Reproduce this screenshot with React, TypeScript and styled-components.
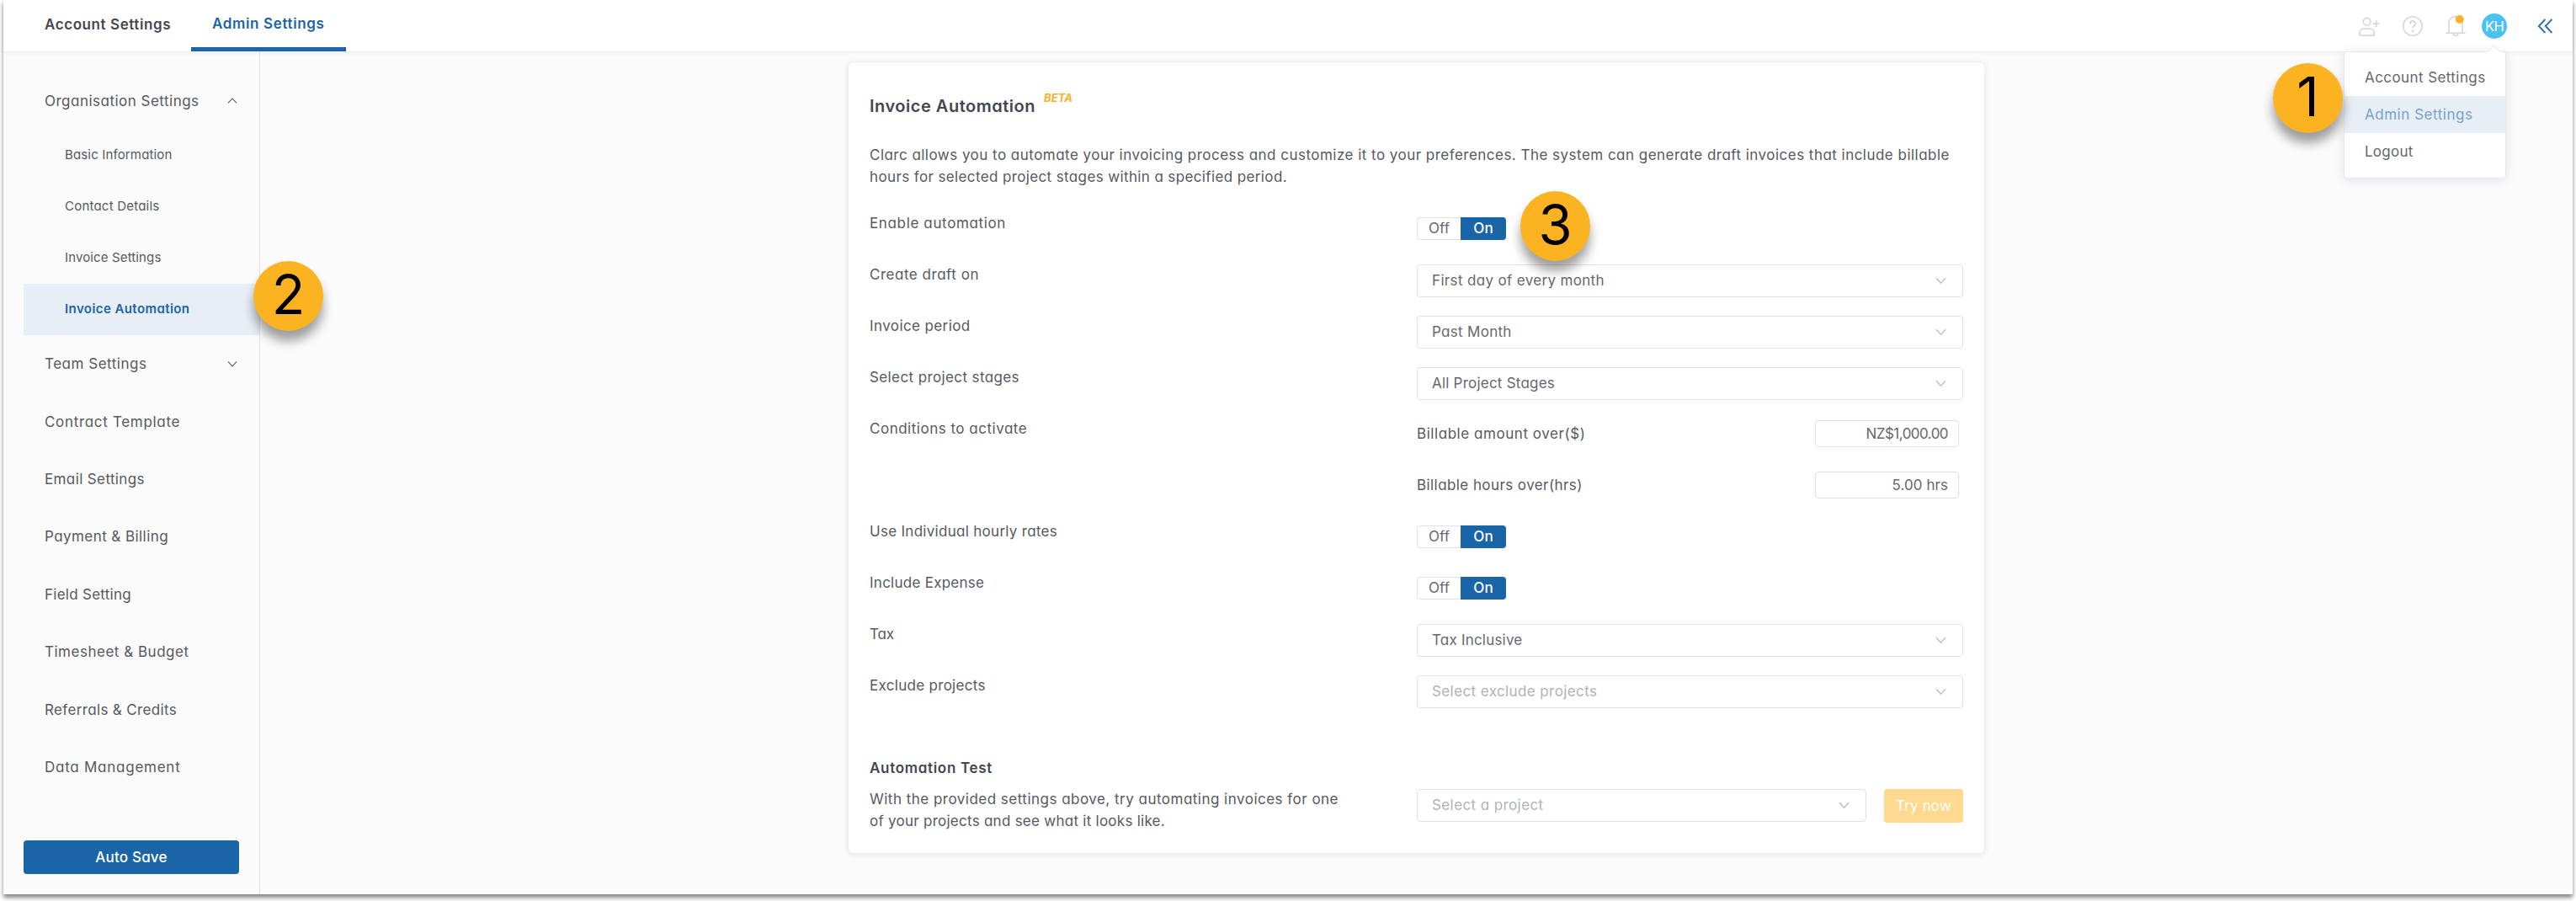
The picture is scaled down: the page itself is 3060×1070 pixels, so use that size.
import React from 'react';
import styled, { createGlobalStyle, css } from 'styled-components';

const colors = {
  primary: '#1a64a8',
  primarySoft: '#e7eef5',
  text: '#555961',
  heading: '#43474f',
  field: '#65686e',
  placeholder: '#afb2b9',
  border: '#dfe1ea',
  icon: '#d4d8de',
  accent: '#fcb322',
  page: '#fbfbfb',
};

const GlobalStyle = createGlobalStyle`
  *, *::before, *::after {
    box-sizing: border-box;
  }

  body {
    height: 1070px;
    margin: 0;
    background: #fff;
    color: ${colors.text};
    font-family: Inter, 'Liberation Sans', sans-serif;
    font-feature-settings: 'cv11';
    font-size: 17px;
    line-height: 26px;
    letter-spacing: 0.45px;
  }
`;

const Frame = styled.div`
  position: relative;
  display: flex;
  flex-direction: column;
  width: 3052px;
  height: 1062px;
  margin: 0 4px;
  background: ${colors.page};
  box-shadow: 0 4px 5px rgba(0, 0, 0, 0.48);
`;

/* Header */

const Header = styled.header`
  position: relative;
  z-index: 2;
  display: flex;
  flex: none;
  justify-content: space-between;
  height: 61px;
  padding: 0 23px 0 26px;
  background: #fff;
  box-shadow: 0 1px 5px rgba(0, 0, 0, 0.08);
`;

const Tabs = styled.nav`
  display: flex;
  align-items: flex-start;
`;

const Tab = styled.a<{ $active?: boolean }>`
  display: flex;
  align-items: center;
  height: 58px;
  padding: 0 24px 0 23px;
  color: ${colors.heading};
  font-weight: 600;
  letter-spacing: 0.58px;
  white-space: nowrap;

  ${({ $active }) =>
    $active &&
    css`
      height: 61px;
      padding: 0 25px;
      color: ${colors.primary};
      border-bottom: 5px solid ${colors.primary};
      letter-spacing: 0.64px;
    `}
`;

const HeaderActions = styled.div`
  display: flex;
  align-items: center;
  gap: 27px;

  svg {
    display: block;
    flex: none;
  }
`;

const AvatarWrap = styled.div`
  position: relative;
  margin: 0 9px 0 -8px;
`;

const Avatar = styled.div`
  display: flex;
  align-items: center;
  justify-content: center;
  width: 30px;
  height: 30px;
  border-radius: 50%;
  background: #4cc2f1;
  color: #fff;
  font-size: 16.5px;
  letter-spacing: -0.6px;
`;

const UserMenu = styled.div`
  position: absolute;
  top: 45px;
  right: 1px;
  width: 193px;
  padding: 8px 0 9px;
  background: #fff;
  border: 1px solid #e4e7ef;
  border-radius: 4px;
  box-shadow: 0 2px 14px rgba(0, 0, 0, 0.1);

  &::before {
    content: '';
    position: absolute;
    top: -6px;
    right: 8px;
    width: 11px;
    height: 11px;
    background: #fff;
    border: 1px solid #e4e7ef;
    border-color: #e4e7ef transparent transparent #e4e7ef;
    transform: rotate(45deg);
  }
`;

const UserMenuItem = styled.a<{ $active?: boolean; $tracking: number }>`
  display: flex;
  align-items: center;
  height: 44px;
  padding-left: 24px;
  background: ${({ $active }) => ($active ? colors.primarySoft : 'transparent')};
  color: ${({ $active }) => ($active ? '#76a2cb' : colors.field)};
  letter-spacing: ${({ $tracking }) => $tracking}px;
  white-space: nowrap;
`;

/* Sidebar */

const Body = styled.div`
  display: flex;
  flex: 1;
  min-height: 0;
`;

const Sidebar = styled.aside`
  display: flex;
  flex: none;
  flex-direction: column;
  width: 305px;
  padding: 24.6px 0 24px 24px;
  border-right: 1px solid #e0e3e9;
`;

const NavItem = styled.a<{ $tracking: number }>`
  display: flex;
  align-items: center;
  justify-content: space-between;
  height: 68.4px;
  padding: 0 26px 0 25px;
  letter-spacing: ${({ $tracking }) => $tracking}px;
  white-space: nowrap;
`;

const SubItem = styled.a<{ $active?: boolean; $tracking: number }>`
  display: flex;
  align-items: center;
  height: 61px;
  padding-left: 49px;
  background: ${({ $active }) => ($active ? colors.primarySoft : 'transparent')};
  color: ${({ $active }) => ($active ? colors.primary : colors.text)};
  font-size: 15px;
  font-weight: ${({ $active }) => ($active ? 600 : 400)};
  letter-spacing: ${({ $tracking }) => $tracking}px;
  white-space: nowrap;
`;

const SaveButton = styled.button`
  width: 256px;
  height: 40px;
  margin-top: auto;
  border: 0;
  border-radius: 4px;
  background: ${colors.primary};
  color: #fff;
  font: inherit;
  font-weight: 500;
  letter-spacing: 0.2px;
`;

/* Settings card */

const Main = styled.main`
  display: flex;
  flex: 1;
  align-items: flex-start;
  justify-content: center;
  padding-top: 13px;
`;

const Card = styled.section`
  width: 1349px;
  height: 939px;
  padding: 39.4px 25px 0;
  background: #fff;
  border-radius: 6px;
  box-shadow: 0 0 0 1px #eceef1, 0 1px 7px 1px rgba(30, 40, 70, 0.1);
`;

const CardTitle = styled.h1`
  display: flex;
  margin: 0 0 33px;
  color: ${colors.heading};
  font-size: 20px;
  font-weight: 600;
  line-height: 26px;
  letter-spacing: 0.51px;
`;

const Beta = styled.sup`
  margin: -10px 0 0 10px;
  color: #ffab2e;
  font-size: 13px;
  font-style: italic;
  font-weight: 700;
  line-height: 26px;
  letter-spacing: 0.1px;
`;

const Paragraph = styled.p`
  margin: 0;
  line-height: 25.6px;
`;

const Line = styled.span<{ $tracking: number }>`
  display: block;
  letter-spacing: ${({ $tracking }) => $tracking}px;
  white-space: nowrap;
`;

const Form = styled.div`
  margin-top: 18.4px;
`;

const FormRow = styled.div`
  display: grid;
  grid-template-columns: 650px 649px;
  height: 61px;
`;

const Label = styled.label<{ $tracking: number }>`
  padding-top: 10px;
  letter-spacing: ${({ $tracking }) => $tracking}px;
  white-space: nowrap;
`;

const Toggle = styled.div`
  display: flex;
  width: 106px;
  height: 27px;
  margin-top: 15.6px;
`;

const ToggleOption = styled.span<{ $on?: boolean }>`
  display: flex;
  align-items: center;
  justify-content: center;
  width: 52px;
  border: 1px solid ${colors.border};
  border-right: 0;
  border-radius: 4px 0 0 4px;
  color: ${colors.field};
  letter-spacing: 0;

  ${({ $on }) =>
    $on &&
    css`
      width: 54px;
      border: 0;
      border-radius: 0 4px 4px 0;
      background: ${colors.primary};
      color: #fff;
      font-weight: 500;
    `}
`;

const SelectBox = styled.div<{ $width?: number; $placeholder?: boolean; $tracking: number }>`
  display: flex;
  align-items: center;
  justify-content: space-between;
  width: ${({ $width = 649 }) => $width}px;
  height: 39px;
  padding: 0 19px 0 17px;
  border: 1px solid ${colors.border};
  border-radius: 4px;
  background: #fff;
  color: ${({ $placeholder }) => ($placeholder ? colors.placeholder : colors.field)};
  letter-spacing: ${({ $tracking }) => $tracking}px;
  white-space: nowrap;
`;

const SelectCell = styled.div`
  padding-top: 11px;
`;

const Condition = styled.div`
  display: flex;
  align-items: center;
  justify-content: space-between;
  height: 32px;
  margin: 13px 5px 0 0;
`;

const ConditionLabel = styled.span<{ $tracking: number }>`
  letter-spacing: ${({ $tracking }) => $tracking}px;
`;

const NumberBox = styled.div<{ $tracking: number }>`
  display: flex;
  align-items: center;
  justify-content: flex-end;
  width: 171px;
  height: 32px;
  padding-right: 12px;
  border: 1px solid ${colors.border};
  border-radius: 4px;
  color: ${colors.field};
  letter-spacing: ${({ $tracking }) => $tracking}px;
`;

const TestTitle = styled.h2`
  margin: 46.6px 0 12.4px;
  color: ${colors.heading};
  font-size: 17px;
  font-weight: 600;
  line-height: 26px;
  letter-spacing: 0.69px;
`;

const TestRow = styled.div`
  display: grid;
  grid-template-columns: 650px 1fr 94px;
  align-items: start;
`;

const TryButton = styled.button`
  height: 40px;
  padding: 0;
  border: 0;
  border-radius: 4px;
  background: #ffd98f;
  color: #fff;
  font: inherit;
  letter-spacing: 0.16px;
`;

/* Numbered callouts lying over the window */

const Callout = styled.div<{ $x: number; $y: number }>`
  position: absolute;
  z-index: 3;
  top: ${({ $y }) => $y}px;
  left: ${({ $x }) => $x}px;
  display: flex;
  align-items: center;
  justify-content: center;
  width: 83px;
  height: 83px;
  padding-bottom: 3px;
  border-radius: 50%;
  background: ${colors.accent};
  box-shadow: 0 12px 13px rgba(0, 0, 0, 0.38);
  color: #000;
  font-size: 65px;
  letter-spacing: 0;
`;

const Chevron = ({ up, color = '#b9bcc3', width = 13 }: { up?: boolean; color?: string; width?: number }) => (
  <svg width={width} height="9" viewBox="0 0 13 9" fill="none" stroke={color} strokeWidth="1.3">
    <path d={up ? 'M1 7.5 6.5 1.8 12 7.5' : 'M1 1.2 6.5 7.2 12 1.2'} />
  </svg>
);

const AddUserIcon = () => (
  <svg width="25" height="26" viewBox="0 0 25 26" fill="none" stroke={colors.icon} strokeWidth="1.7">
    <circle cx="9.6" cy="7.7" r="4.3" />
    <path d="M1.2 24.2v-3.4c0-2.6 2-4.6 4.6-4.6h7.6c2.6 0 4.6 2 4.6 4.6v3.4z" />
    <path d="M20.6 6.2v8M16.6 10.2h8" />
  </svg>
);

const HelpIcon = () => (
  <svg width="24" height="24" viewBox="0 0 24 24" fill="none" stroke={colors.icon} strokeWidth="1.6">
    <circle cx="12" cy="12" r="11.2" />
    <path d="M8.8 9.4c0-2 1.4-3.3 3.3-3.3s3.3 1.3 3.3 3c0 2.3-3.3 2.6-3.3 5.4" strokeWidth="1.9" />
    <circle cx="12.1" cy="17.8" r="0.7" fill={colors.icon} />
  </svg>
);

const BellIcon = () => (
  <svg width="24" height="26" viewBox="0 0 24 26" fill="none" stroke={colors.icon} strokeWidth="1.6">
    <path d="M0.3 21.2h23.4" />
    <path d="M4 21V9.4C4 5 7.4 1.6 12 1.6S20 5 20 9.4V21" />
    <path d="M9 21.4c0 1.8 1.2 3 3 3s3-1.2 3-3" />
    <circle cx="16.8" cy="5" r="5" fill={colors.accent} stroke="none" />
  </svg>
);

const CollapseIcon = () => (
  <svg width="19" height="18" viewBox="0 0 19 18" fill="none" stroke="#2f6fb0" strokeWidth="1.9">
    <path d="M9.4 1 1.8 9l7.6 8M17.4 1 9.8 9l7.6 8" />
  </svg>
);

const OnToggle = () => (
  <Toggle>
    <ToggleOption>Off</ToggleOption>
    <ToggleOption $on>On</ToggleOption>
  </Toggle>
);

interface FieldProps {
  value: string;
  tracking: number;
  placeholder?: boolean;
}

const SelectField = ({ value, tracking, placeholder }: FieldProps) => (
  <SelectCell>
    <SelectBox $tracking={tracking} $placeholder={placeholder}>
      {value}
      <Chevron />
    </SelectBox>
  </SelectCell>
);

const subItems = [
  { label: 'Basic Information', tracking: 0.15 },
  { label: 'Contact Details', tracking: 0.22 },
  { label: 'Invoice Settings', tracking: 0.13 },
  { label: 'Invoice Automation', tracking: 0.42, active: true },
];

const navItems = [
  { label: 'Contract Template', tracking: 0.68 },
  { label: 'Email Settings', tracking: 0.38 },
  { label: 'Payment & Billing', tracking: 0.43 },
  { label: 'Field Setting', tracking: 0.27 },
  { label: 'Timesheet & Budget', tracking: 0.51 },
  { label: 'Referrals & Credits', tracking: 0.35 },
  { label: 'Data Management', tracking: 0.75 },
];

const callouts = [
  { n: 1, x: 2696, y: 75 },
  { n: 2, x: 297, y: 310 },
  { n: 3, x: 1802, y: 227 },
];

export default function App() {
  return (
    <>
      <GlobalStyle />
      <Frame>
        <Header>
          <Tabs>
            <Tab>Account Settings</Tab>
            <Tab $active>Admin Settings</Tab>
          </Tabs>
          <HeaderActions>
            <AddUserIcon />
            <HelpIcon />
            <BellIcon />
            <AvatarWrap>
              <Avatar>KH</Avatar>
              <UserMenu>
                <UserMenuItem $tracking={0.42}>Account Settings</UserMenuItem>
                <UserMenuItem $tracking={0.53} $active>
                  Admin Settings
                </UserMenuItem>
                <UserMenuItem $tracking={0.24}>Logout</UserMenuItem>
              </UserMenu>
            </AvatarWrap>
            <CollapseIcon />
          </HeaderActions>
        </Header>

        <Body>
          <Sidebar>
            <NavItem $tracking={0.49}>
              Organisation Settings
              <Chevron up color="#6b6f76" width={12} />
            </NavItem>
            {subItems.map(({ label, tracking, active }) => (
              <SubItem key={label} $tracking={tracking} $active={active}>
                {label}
              </SubItem>
            ))}
            <NavItem $tracking={0.52}>
              Team Settings
              <Chevron color="#6b6f76" width={12} />
            </NavItem>
            {navItems.map(({ label, tracking }) => (
              <NavItem key={label} $tracking={tracking}>
                {label}
              </NavItem>
            ))}
            <SaveButton>Auto Save</SaveButton>
          </Sidebar>

          <Main>
            <Card>
              <CardTitle>
                Invoice Automation
                <Beta>BETA</Beta>
              </CardTitle>
              <Paragraph>
                <Line $tracking={0.474}>
                  Clarc allows you to automate your invoicing process and customize it to your preferences. The system
                  can generate draft invoices that include billable
                </Line>
                <Line $tracking={0.376}>hours for selected project stages within a specified period.</Line>
              </Paragraph>

              <Form>
                <FormRow>
                  <Label $tracking={0.64}>Enable automation</Label>
                  <OnToggle />
                </FormRow>
                <FormRow>
                  <Label $tracking={0.52}>Create draft on</Label>
                  <SelectField value="First day of every month" tracking={0.34} />
                </FormRow>
                <FormRow>
                  <Label $tracking={0.4}>Invoice period</Label>
                  <SelectField value="Past Month" tracking={0.3} />
                </FormRow>
                <FormRow>
                  <Label $tracking={0.39}>Select project stages</Label>
                  <SelectField value="All Project Stages" tracking={0.22} />
                </FormRow>
                <FormRow>
                  <Label $tracking={0.51}>Conditions to activate</Label>
                  <Condition>
                    <ConditionLabel $tracking={0.55}>Billable amount over($)</ConditionLabel>
                    <NumberBox $tracking={-0.55}>NZ$1,000.00</NumberBox>
                  </Condition>
                </FormRow>
                <FormRow>
                  <span />
                  <Condition>
                    <ConditionLabel $tracking={0.42}>Billable hours over(hrs)</ConditionLabel>
                    <NumberBox $tracking={0.06}>5.00 hrs</NumberBox>
                  </Condition>
                </FormRow>
                <FormRow>
                  <Label $tracking={0.29}>Use Individual hourly rates</Label>
                  <OnToggle />
                </FormRow>
                <FormRow>
                  <Label $tracking={0.26}>Include Expense</Label>
                  <OnToggle />
                </FormRow>
                <FormRow>
                  <Label $tracking={-0.2}>Tax</Label>
                  <SelectField value="Tax Inclusive" tracking={0.2} />
                </FormRow>
                <FormRow>
                  <Label $tracking={0.3}>Exclude projects</Label>
                  <SelectField value="Select exclude projects" tracking={0.4} placeholder />
                </FormRow>
              </Form>

              <TestTitle>Automation Test</TestTitle>
              <TestRow>
                <Paragraph>
                  <Line $tracking={0.484}>With the provided settings above, try automating invoices for one</Line>
                  <Line $tracking={0.26}>of your projects and see what it looks like.</Line>
                </Paragraph>
                <SelectBox $width={534} $tracking={0.4} $placeholder>
                  Select a project
                  <Chevron />
                </SelectBox>
                <TryButton>Try now</TryButton>
              </TestRow>
            </Card>
          </Main>
        </Body>

        {callouts.map(({ n, x, y }) => (
          <Callout key={n} $x={x} $y={y}>
            {n}
          </Callout>
        ))}
      </Frame>
    </>
  );
}
